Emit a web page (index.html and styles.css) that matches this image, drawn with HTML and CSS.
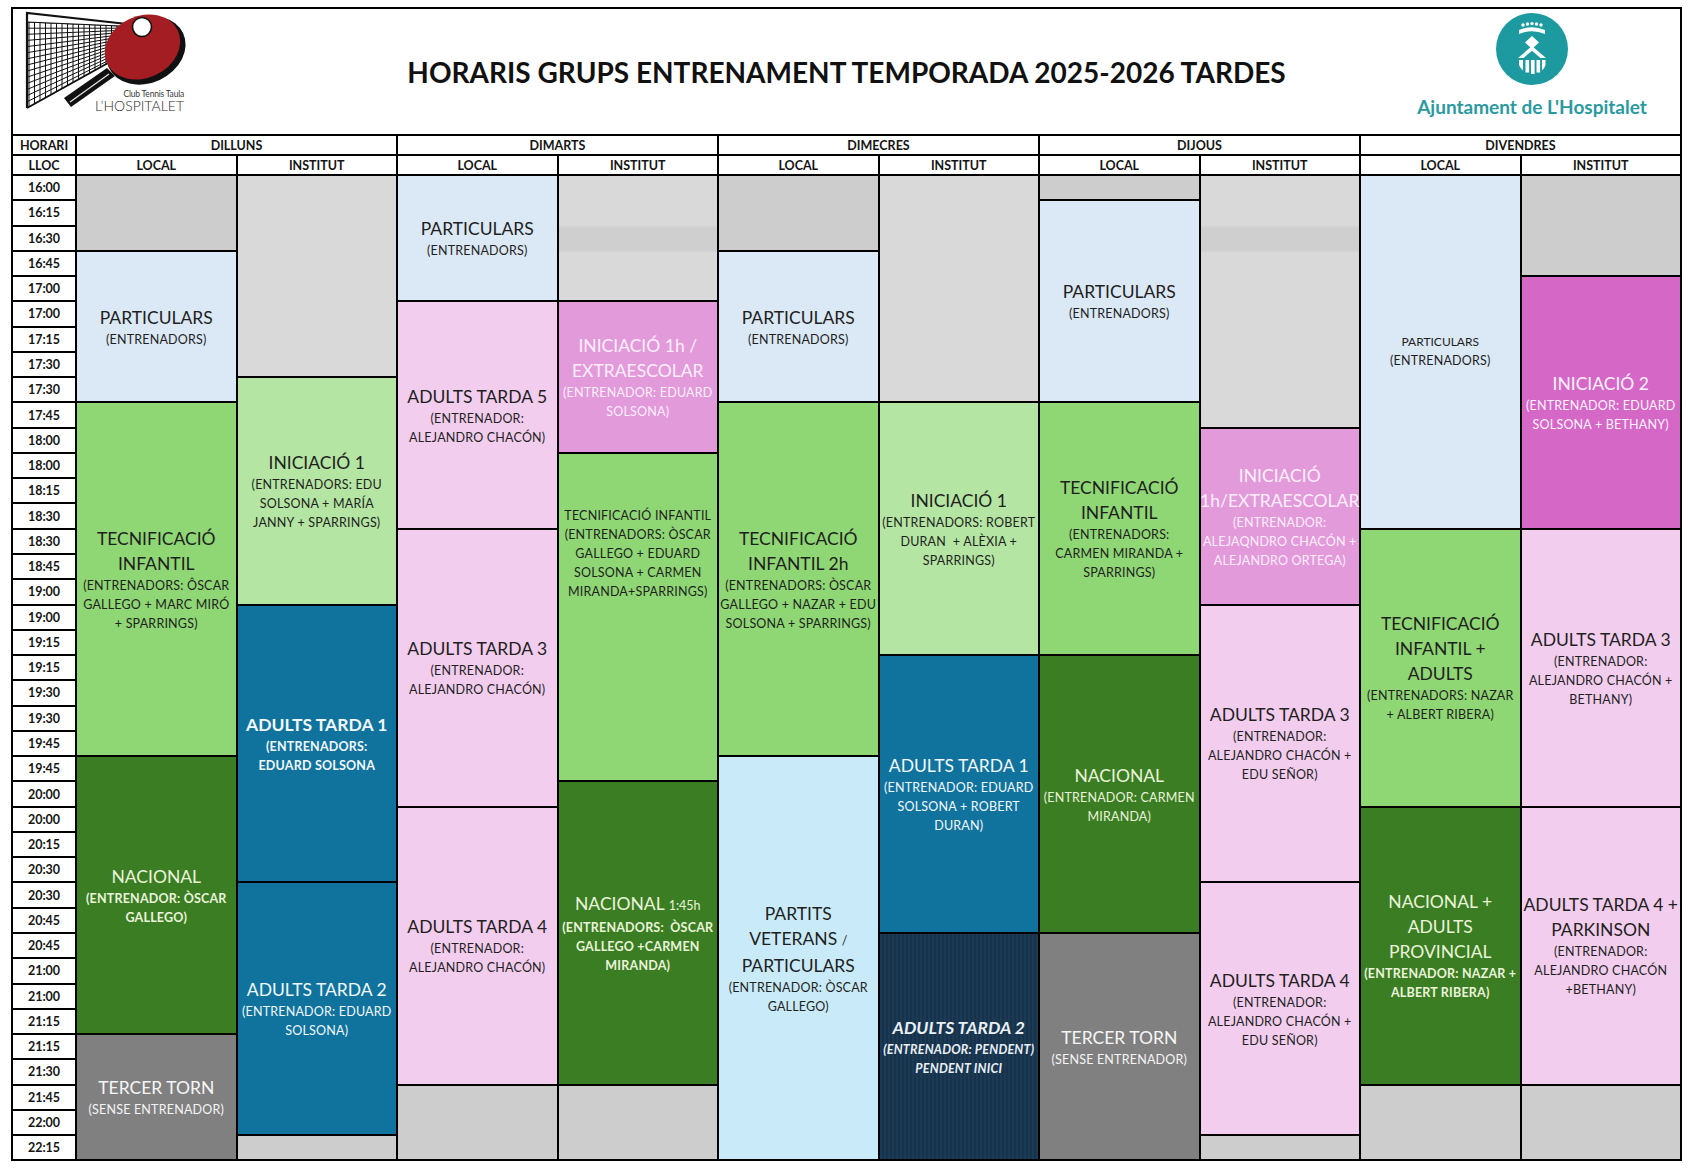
FILE: index.html
```html
<!DOCTYPE html>
<html lang="ca">
<head>
<meta charset="utf-8">
<title>Horaris grups entrenament 2025-2026 tardes</title>
<link rel="stylesheet" href="styles.css">
</head>
<body>
<div class="sheet">
  <header class="top">
    <div class="brand-left">
      <svg width="160" height="106" viewBox="0 0 160 106">
        <defs>
          <clipPath id="netclip"><polygon points="2,10 95,14 95,45 2,96"/></clipPath>
        </defs>
        <g clip-path="url(#netclip)" stroke="#111" stroke-width="1">
          <line x1="4" y1="0" x2="4" y2="100"/><line x1="9.5" y1="0" x2="9.5" y2="100"/><line x1="15" y1="0" x2="15" y2="100"/><line x1="20.5" y1="0" x2="20.5" y2="100"/><line x1="26" y1="0" x2="26" y2="100"/><line x1="31.5" y1="0" x2="31.5" y2="100"/><line x1="37" y1="0" x2="37" y2="100"/><line x1="42.5" y1="0" x2="42.5" y2="100"/><line x1="48" y1="0" x2="48" y2="100"/><line x1="53.5" y1="0" x2="53.5" y2="100"/><line x1="59" y1="0" x2="59" y2="100"/><line x1="64.5" y1="0" x2="64.5" y2="100"/><line x1="70" y1="0" x2="70" y2="100"/><line x1="75.5" y1="0" x2="75.5" y2="100"/><line x1="81" y1="0" x2="81" y2="100"/><line x1="86.5" y1="0" x2="86.5" y2="100"/><line x1="92" y1="0" x2="92" y2="100"/>
          <line x1="2" y1="10" x2="95" y2="14"/><line x1="2" y1="16.2" x2="95" y2="16.2"/><line x1="2" y1="22.3" x2="95" y2="18.4"/><line x1="2" y1="28.4" x2="95" y2="20.6"/><line x1="2" y1="34.6" x2="95" y2="22.8"/><line x1="2" y1="40.7" x2="95" y2="25"/><line x1="2" y1="46.8" x2="95" y2="27.2"/><line x1="2" y1="53" x2="95" y2="29.4"/><line x1="2" y1="59.1" x2="95" y2="31.6"/><line x1="2" y1="65.2" x2="95" y2="33.8"/><line x1="2" y1="71.4" x2="95" y2="36"/><line x1="2" y1="77.5" x2="95" y2="38.2"/><line x1="2" y1="83.6" x2="95" y2="40.4"/><line x1="2" y1="89.8" x2="95" y2="42.6"/>
        </g>
        <polyline points="2,96 2,1 102,12" fill="none" stroke="#111" stroke-width="2.2"/>
        <line x1="2" y1="10" x2="96" y2="14" stroke="#111" stroke-width="1.2"/>
        <line x1="2" y1="96" x2="92" y2="46" stroke="#111" stroke-width="2"/>
        <polygon points="90,64 82,56 39,86 46,95" fill="#111"/>
        <line x1="84" y1="62" x2="45" y2="90" stroke="#e6e6e6" stroke-width="1.2"/>
        <ellipse cx="121" cy="38.5" rx="41" ry="32.5" transform="rotate(-25 121 38.5)" fill="#111"/>
        <ellipse cx="117.5" cy="35" rx="39" ry="31" transform="rotate(-25 117.5 35)" fill="#a31d22"/>
        <circle cx="117" cy="15" r="9.5" fill="#fff" stroke="#111" stroke-width="1.6"/>
        <text x="159" y="85" text-anchor="end" class="logo-small">Club Tennis Taula</text>
        <text x="159" y="99" text-anchor="end" class="logo-big">L’HOSPITALET</text>
      </svg>
    </div>
    <h1 class="title">HORARIS GRUPS ENTRENAMENT TEMPORADA 2025-2026 TARDES</h1>
    <div class="brand-right">
      <svg width="72" height="72" viewBox="0 0 72 72">
        <circle cx="36" cy="36" r="36" fill="#1d9aa0"/>
        <g fill="#fff">
          <circle cx="27" cy="12" r="1.7"/><circle cx="31.5" cy="11" r="1.7"/><circle cx="36" cy="10.6" r="1.7"/><circle cx="40.5" cy="11" r="1.7"/><circle cx="45" cy="12" r="1.7"/>
          <path d="M23 17 Q36 11.5 49 17 L49 21 Q36 15.5 23 21 Z"/>
          <polygon points="36,23 43,29.5 36,36 29,29.5"/>
          <polygon points="36,33 50,45 44.5,45 36,37.8 27.5,45 22,45"/>
          <path d="M23 47 H27 V57.5 Q24.5 55.5 23 52 Z"/>
          <rect x="29.5" y="47" width="3.6" height="12.5"/>
          <rect x="35" y="47" width="3.6" height="14"/>
          <rect x="40.5" y="47" width="3.6" height="12.5"/>
          <path d="M46 47 H49.5 V52 Q48.5 55.5 46 57.5 Z"/>
        </g>
      </svg>
      <div class="ajuntament">Ajuntament de L'Hospitalet</div>
    </div>
  </header>

  <div class="table">
    <div class="hc">HORARI</div>
    <div class="hc day">DILLUNS</div>
    <div class="hc day">DIMARTS</div>
    <div class="hc day">DIMECRES</div>
    <div class="hc day">DIJOUS</div>
    <div class="hc day">DIVENDRES</div>

    <div class="hc">LLOC</div>
    <div class="hc">LOCAL</div><div class="hc">INSTITUT</div>
    <div class="hc">LOCAL</div><div class="hc">INSTITUT</div>
    <div class="hc">LOCAL</div><div class="hc">INSTITUT</div>
    <div class="hc">LOCAL</div><div class="hc">INSTITUT</div>
    <div class="hc">LOCAL</div><div class="hc">INSTITUT</div>

    <div class="times">
      <div>16:00</div><div>16:15</div><div>16:30</div><div>16:45</div><div>17:00</div>
      <div>17:00</div><div>17:15</div><div>17:30</div><div>17:30</div><div>17:45</div>
      <div>18:00</div><div>18:00</div><div>18:15</div><div>18:30</div><div>18:30</div>
      <div>18:45</div><div>19:00</div><div>19:00</div><div>19:15</div><div>19:15</div>
      <div>19:30</div><div>19:30</div><div>19:45</div><div>19:45</div><div>20:00</div>
      <div>20:00</div><div>20:15</div><div>20:30</div><div>20:30</div><div>20:45</div>
      <div>20:45</div><div>21:00</div><div>21:00</div><div>21:15</div><div>21:15</div>
      <div>21:30</div><div>21:45</div><div>22:00</div><div>22:15</div>
    </div>

    <!-- DILLUNS LOCAL -->
    <div class="col">
      <div class="b g1 r3"></div>
      <div class="b blue-lt r6"><div class="t">PARTICULARS</div><div class="s">(ENTRENADORS)</div></div>
      <div class="b green r14"><div class="t">TECNIFICACIÓ<br>INFANTIL</div><div class="s">(ENTRENADORS: ÔSCAR<br>GALLEGO + MARC MIRÓ<br>+ SPARRINGS)</div></div>
      <div class="b green-dk r11"><div class="t">NACIONAL</div><div class="s bold">(ENTRENADOR: ÒSCAR<br>GALLEGO)</div></div>
      <div class="b slate r5"><div class="t">TERCER TORN</div><div class="s">(SENSE ENTRENADOR)</div></div>
    </div>
    <!-- DILLUNS INSTITUT -->
    <div class="col">
      <div class="b g2 r8"></div>
      <div class="b green-lt r9"><div class="t">INICIACIÓ 1</div><div class="s">(ENTRENADORS: EDU<br>SOLSONA + MARÍA<br>JANNY + SPARRINGS)</div></div>
      <div class="b blue r11"><div class="t bold">ADULTS TARDA 1</div><div class="s bold">(ENTRENADORS:<br>EDUARD SOLSONA</div></div>
      <div class="b blue r10"><div class="t">ADULTS TARDA 2</div><div class="s">(ENTRENADOR: EDUARD<br>SOLSONA)</div></div>
      <div class="b g1 r1"></div>
    </div>
    <!-- DIMARTS LOCAL -->
    <div class="col">
      <div class="b blue-lt r5"><div class="t">PARTICULARS</div><div class="s">(ENTRENADORS)</div></div>
      <div class="b pink r9"><div class="t">ADULTS TARDA 5</div><div class="s">(ENTRENADOR:<br>ALEJANDRO CHACÓN)</div></div>
      <div class="b pink r11"><div class="t">ADULTS TARDA 3</div><div class="s">(ENTRENADOR:<br>ALEJANDRO CHACÓN)</div></div>
      <div class="b pink r11"><div class="t">ADULTS TARDA 4</div><div class="s">(ENTRENADOR:<br>ALEJANDRO CHACÓN)</div></div>
      <div class="b g1 r3"></div>
    </div>
    <!-- DIMARTS INSTITUT -->
    <div class="col">
      <div class="b g2 band r5"></div>
      <div class="b orchid r6"><div class="t">INICIACIÓ 1h /<br>EXTRAESCOLAR</div><div class="s">(ENTRENADOR: EDUARD<br>SOLSONA)</div></div>
      <div class="b green r13 text-high"><div class="s">TECNIFICACIÓ INFANTIL<br>(ENTRENADORS: ÒSCAR<br>GALLEGO + EDUARD<br>SOLSONA + CARMEN<br>MIRANDA+SPARRINGS)</div></div>
      <div class="b green-dk r12"><div class="t">NACIONAL <span class="mini">1:45h</span></div><div class="s bold">(ENTRENADORS:&nbsp; ÒSCAR<br>GALLEGO +CARMEN<br>MIRANDA)</div></div>
      <div class="b g1 r3"></div>
    </div>
    <!-- DIMECRES LOCAL -->
    <div class="col">
      <div class="b g1 r3"></div>
      <div class="b blue-lt r6"><div class="t">PARTICULARS</div><div class="s">(ENTRENADORS)</div></div>
      <div class="b green r14"><div class="t">TECNIFICACIÓ<br>INFANTIL 2h</div><div class="s">(ENTRENADORS: ÒSCAR<br>GALLEGO + NAZAR + EDU<br>SOLSONA + SPARRINGS)</div></div>
      <div class="b cyan-lt r16"><div class="t">PARTITS<br>VETERANS <span class="mini">/</span><br>PARTICULARS</div><div class="s">(ENTRENADOR: ÒSCAR<br>GALLEGO)</div></div>
    </div>
    <!-- DIMECRES INSTITUT -->
    <div class="col">
      <div class="b g2 r9"></div>
      <div class="b green-lt r10"><div class="t">INICIACIÓ 1</div><div class="s">(ENTRENADORS: ROBERT<br>DURAN&nbsp; + ALÈXIA +<br>SPARRINGS)</div></div>
      <div class="b blue r11"><div class="t">ADULTS TARDA 1</div><div class="s">(ENTRENADOR: EDUARD<br>SOLSONA + ROBERT<br>DURAN)</div></div>
      <div class="b navy r9"><div class="t">ADULTS TARDA 2</div><div class="s">(ENTRENADOR: PENDENT)<br>PENDENT INICI</div></div>
    </div>
    <!-- DIJOUS LOCAL -->
    <div class="col">
      <div class="b g1 r1"></div>
      <div class="b blue-lt r8"><div class="t">PARTICULARS</div><div class="s">(ENTRENADORS)</div></div>
      <div class="b green r10"><div class="t">TECNIFICACIÓ<br>INFANTIL</div><div class="s">(ENTRENADORS:<br>CARMEN MIRANDA +<br>SPARRINGS)</div></div>
      <div class="b green-dk r11"><div class="t">NACIONAL</div><div class="s">(ENTRENADOR: CARMEN<br>MIRANDA)</div></div>
      <div class="b slate r9"><div class="t">TERCER TORN</div><div class="s">(SENSE ENTRENADOR)</div></div>
    </div>
    <!-- DIJOUS INSTITUT -->
    <div class="col">
      <div class="b g2 band r10"></div>
      <div class="b orchid r7"><div class="t">INICIACIÓ<br>1h/EXTRAESCOLAR</div><div class="s">(ENTRENADOR:<br>ALEJAQNDRO CHACÓN +<br>ALEJANDRO ORTEGA)</div></div>
      <div class="b pink r11"><div class="t">ADULTS TARDA 3</div><div class="s">(ENTRENADOR:<br>ALEJANDRO CHACÓN +<br>EDU SEÑOR)</div></div>
      <div class="b pink r10"><div class="t">ADULTS TARDA 4</div><div class="s">(ENTRENADOR:<br>ALEJANDRO CHACÓN +<br>EDU SEÑOR)</div></div>
      <div class="b g1 r1"></div>
    </div>
    <!-- DIVENDRES LOCAL -->
    <div class="col">
      <div class="b blue-lt r14"><div class="t small">PARTICULARS</div><div class="s">(ENTRENADORS)</div></div>
      <div class="b green r11"><div class="t">TECNIFICACIÓ<br>INFANTIL +<br>ADULTS</div><div class="s">(ENTRENADORS: NAZAR<br>+ ALBERT RIBERA)</div></div>
      <div class="b green-dk r11"><div class="t">NACIONAL +<br>ADULTS<br>PROVINCIAL</div><div class="s bold">(ENTRENADOR: NAZAR +<br>ALBERT RIBERA)</div></div>
      <div class="b g1 r3"></div>
    </div>
    <!-- DIVENDRES INSTITUT -->
    <div class="col">
      <div class="b g1 r4"></div>
      <div class="b magenta r10"><div class="t">INICIACIÓ 2</div><div class="s">(ENTRENADOR: EDUARD<br>SOLSONA + BETHANY)</div></div>
      <div class="b pink r11"><div class="t">ADULTS TARDA 3</div><div class="s">(ENTRENADOR:<br>ALEJANDRO CHACÓN +<br>BETHANY)</div></div>
      <div class="b pink r11"><div class="t">ADULTS TARDA 4 +<br>PARKINSON</div><div class="s">(ENTRENADOR:<br>ALEJANDRO CHACÓN<br>+BETHANY)</div></div>
      <div class="b g1 r3"></div>
    </div>
  </div>
</div>
</body>
</html>
```

FILE: styles.css
```css
* { box-sizing: border-box; }

body {
  margin: 0;
  background: #ffffff;
  font-family: Lato, "Open Sans", "DejaVu Sans", sans-serif;
  color: #1f1f1f;
}

.sheet {
  margin: 7px 0 0 11px;
  width: 1671px;
  border: 2px solid #000;
  background: #fff;
}

/* ---------- header ---------- */
.top {
  height: 127px;
  border-bottom: 2px solid #000;
  display: grid;
  grid-template-columns: 300px 1fr 300px;
  align-items: start;
}

.brand-left {
  padding: 3px 0 0 12px;
}
.brand-left svg { display: block; overflow: visible; }

.logo-small {
  font-family: Lato, "Open Sans", sans-serif;
  font-size: 8.5px;
  fill: #3a3a3a;
  letter-spacing: -0.2px;
}
.logo-big {
  font-family: Lato, "Open Sans", sans-serif;
  font-size: 14px;
  font-weight: 300;
  fill: #2a2a2a;
}

.title {
  margin: 0;
  align-self: center;
  text-align: center;
  font-size: 28px;
  font-weight: 700;
  color: #111;
  white-space: nowrap;
}

.brand-right {
  display: flex;
  flex-direction: column;
  align-items: center;
  padding: 4px 0 0 4px;
}
.brand-right svg { display: block; }

.ajuntament {
  margin-top: 11px;
  font-size: 19px;
  line-height: 22px;
  font-weight: 700;
  color: #2a9aa0;
  white-space: nowrap;
}

/* ---------- table ---------- */
.table {
  display: grid;
  grid-template-columns: 62px repeat(10, 1fr);
  grid-template-rows: 18px 18px auto;
  gap: 2px;
  background: #000;
}

.hc {
  background: #fff;
  display: flex;
  align-items: center;
  justify-content: center;
  font-size: 12.5px;
  font-weight: 700;
  color: #141414;
}
.day { grid-column: span 2; }

.times,
.col {
  display: grid;
  grid-template-rows: repeat(39, 23.28px);
  gap: 2px;
  background: #000;
}

.times div {
  background: #fff;
  display: flex;
  align-items: center;
  justify-content: center;
  font-size: 12.5px;
  font-weight: 700;
  color: #141414;
}

/* blocks */
.b {
  display: flex;
  flex-direction: column;
  align-items: center;
  justify-content: center;
  text-align: center;
  white-space: nowrap;
  min-width: 0;
}

.t {
  font-size: 17.5px;
  line-height: 25px;
}
.t.small {
  font-size: 12px;
  line-height: 18px;
}
.s {
  font-size: 12.5px;
  line-height: 19px;
  letter-spacing: 0.2px;
}
.bold { font-weight: 700; }
.mini { font-size: 12.5px; }

.text-high {
  justify-content: flex-start;
  padding-top: 52px;
}

/* spans */
.r1 { grid-row: span 1; }
.r3 { grid-row: span 3; }
.r4 { grid-row: span 4; }
.r5 { grid-row: span 5; }
.r6 { grid-row: span 6; }
.r7 { grid-row: span 7; }
.r8 { grid-row: span 8; }
.r9 { grid-row: span 9; }
.r10 { grid-row: span 10; }
.r11 { grid-row: span 11; }
.r12 { grid-row: span 12; }
.r13 { grid-row: span 13; }
.r14 { grid-row: span 14; }
.r16 { grid-row: span 16; }

/* colours */
.g1 { background: #cdcdcd; }
.g2 { background: #d9d9d9; }
.band {
  background: linear-gradient(to bottom,
    #d9d9d9 0, #d9d9d9 49px,
    #cfcfcf 52px, #cfcfcf 74px,
    #d9d9d9 77px, #d9d9d9 100%);
}
.blue-lt { background: #dbe8f6; }
.cyan-lt { background: #c9ebf9; }
.green { background: #8fd674; }
.green-lt { background: #b4e5a2; }
.green-dk { background: #3b7d23; color: #eaf4da; }
.blue { background: #10739e; color: #f3f8fb; }
.navy {
  background: repeating-linear-gradient(90deg, #1b3a55 0, #1b3a55 2px, #173249 2px, #173249 4px);
  color: #e9eff5;
  font-style: italic;
  font-weight: 700;
}
.slate { background: #808080; color: #f5f5f5; }
.pink { background: #f2cdee; }
.orchid { background: #e29ada; color: #fdeefb; }
.magenta { background: #d567c7; color: #fff2fc; }
```
